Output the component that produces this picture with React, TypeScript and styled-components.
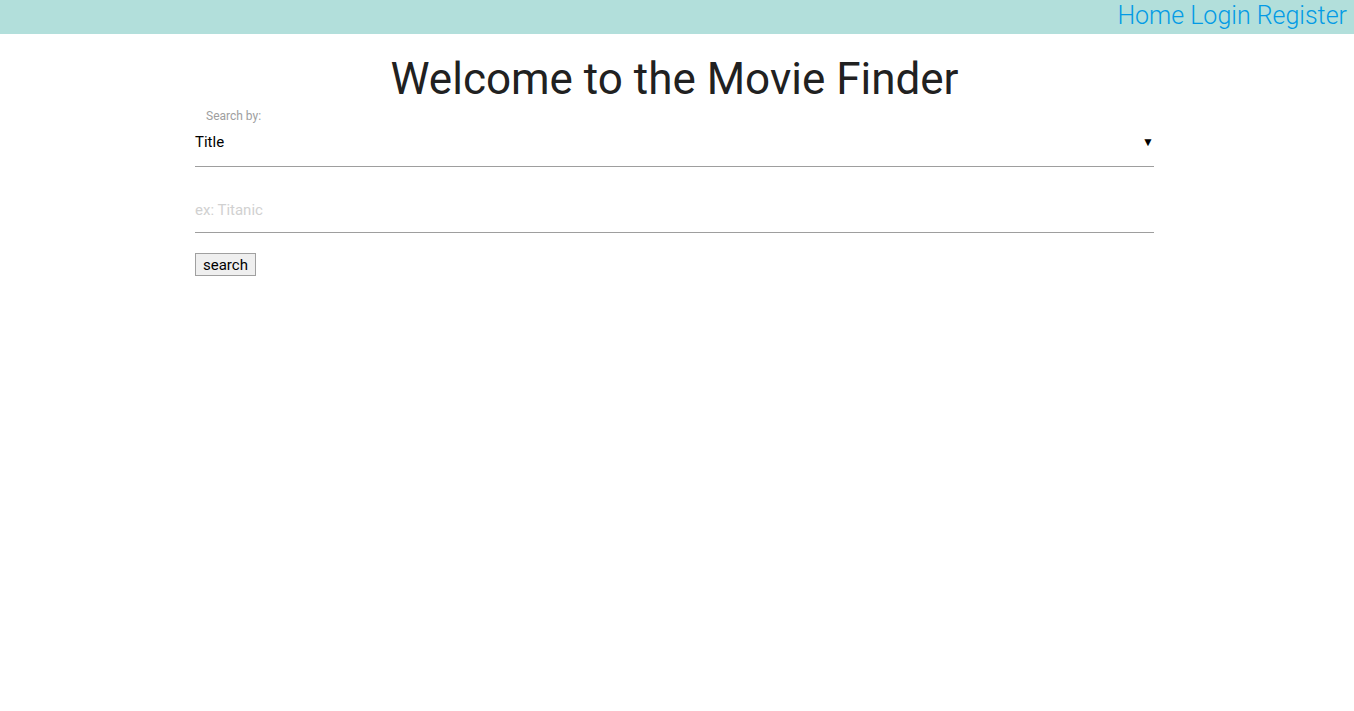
import React from "react";
import styled, { createGlobalStyle } from "styled-components";

const Global = createGlobalStyle`
  html, body { margin: 0; padding: 0; background: #fff; }
  body { font-family: Roboto, "Noto Sans", sans-serif; color: #212121; }
  * { box-sizing: border-box; }
`;

const TopBar = styled.nav`
  height: 34px;
  background: #b2dfdb;
  display: flex;
  justify-content: flex-end;
  align-items: center;
  padding-right: 7px;
  padding-bottom: 3px;
`;

const NavLink = styled.a`
  font-family: Roboto, sans-serif;
  font-size: 25px;
  font-weight: 300;
  color: #039be5;
  text-decoration: none;
  line-height: 30px;
  margin-left: 6px;
`;

const Container = styled.main`
  width: 959px;
  margin-left: 195px;
  display: flex;
  flex-direction: column;
`;

const Title = styled.h1`
  font-size: 44px;
  font-weight: 400;
  text-align: center;
  margin: 20px 0 0;
  line-height: 50px;
  color: #212121;
`;

const Label = styled.label`
  font-size: 12px;
  color: #9e9e9e;
  padding-left: 11px;
  margin-top: 5px;
  line-height: 14px;
`;

const SelectBox = styled.div`
  height: 44px;
  border-bottom: 1px solid #9e9e9e;
  display: flex;
  justify-content: space-between;
  align-items: center;
  font-size: 15px;
  color: #000;
  padding-bottom: 5px;
`;

const Arrow = styled.span`
  font-size: 12px;
  margin-right: 0;
`;

const TextInput = styled.input`
  margin-top: 18px;
  height: 48px;
  border: none;
  border-bottom: 1px solid #9e9e9e;
  outline: none;
  font-family: Roboto, sans-serif;
  font-size: 15px;
  padding: 2px 0 0;
  &::placeholder { color: #d1d1d1; }
`;

const Button = styled.button`
  align-self: flex-start;
  margin-top: 20px;
  height: 23px;
  padding: 0 7px;
  font-family: Roboto, sans-serif;
  font-size: 15px;
  color: #000;
  background: #efefef;
  border: 1px solid #a0a0a0;
  border-radius: 0;
`;

export default function App() {
  return (
    <>
      <Global />
      <TopBar>
        <NavLink href="#">Home</NavLink>
        <NavLink href="#">Login</NavLink>
        <NavLink href="#">Register</NavLink>
      </TopBar>
      <Container>
        <Title>Welcome to the Movie Finder</Title>
        <Label>Search by:</Label>
        <SelectBox>
          <span>Title</span>
          <Arrow>▼</Arrow>
        </SelectBox>
        <TextInput placeholder="ex: Titanic" />
        <Button>search</Button>
      </Container>
    </>
  );
}
